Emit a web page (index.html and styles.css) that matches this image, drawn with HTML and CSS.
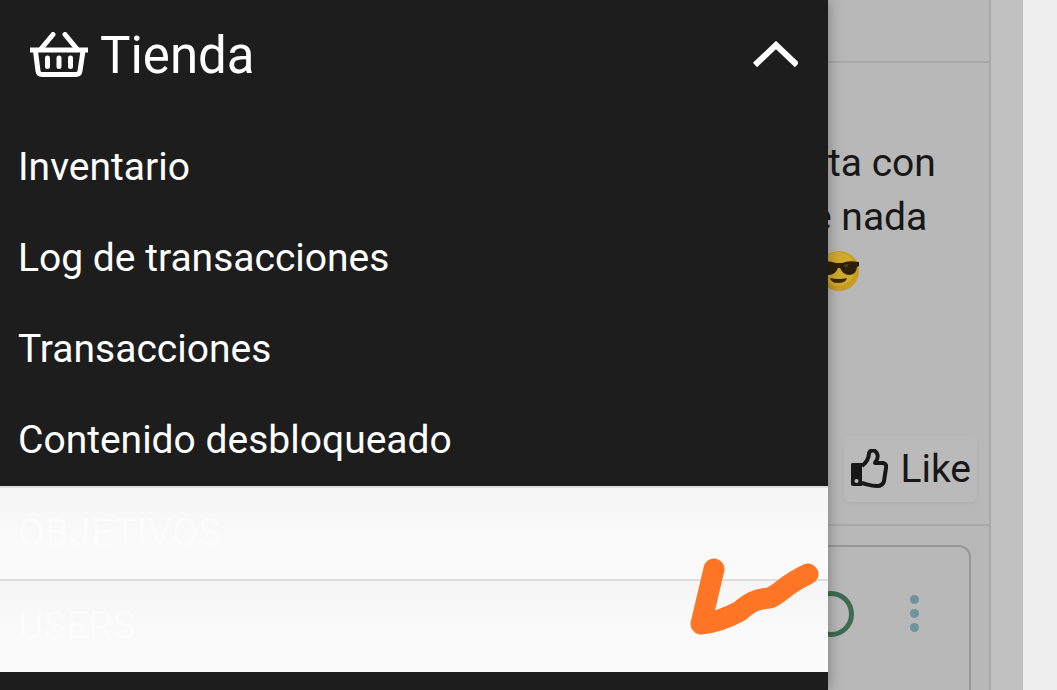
FILE: index.html
```
<!DOCTYPE html>
<html lang="es">
<head>
    <meta charset="UTF-8">
    <meta name="viewport" content="width=device-width, initial-scale=1.0">
    <title>Tienda</title>
    <link rel="stylesheet" href="styles.css">
</head>
<body>
    <div class="layout">
        <nav class="drawer">
            <button class="drawer-header" type="button" aria-expanded="true">
                <svg class="basket" viewBox="0 0 58 46" aria-hidden="true">
                    <g fill="none" stroke="#fff" stroke-linecap="round" stroke-linejoin="round">
                        <path d="M11 17 23 2.500M47 17 35 2.500" stroke-width="5"/>
                        <path d="M0 18H58" stroke-width="5" stroke-linecap="butt"/>
                        <path d="M5.500 19 8 39Q8.500 42.500 12 42.500H46Q49.500 42.500 50 39L53 19" stroke-width="5"/>
                        <path d="M17.500 26V34.500M29 26V34.500M40.500 26V34.500" stroke-width="5"/>
                    </g>
                </svg>
                <span class="drawer-title">Tienda</span>
                <svg class="chevron" viewBox="0 0 46 28" aria-hidden="true">
                    <path d="M3 24 24 4 45 24" fill="none" stroke="#fff" stroke-width="6"/>
                </svg>
            </button>
            <ul class="menu">
                <li><a href="#">Inventario</a></li>
                <li><a href="#">Log de transacciones</a></li>
                <li><a href="#">Transacciones</a></li>
                <li><a href="#">Contenido desbloqueado</a></li>
            </ul>
            <ul class="menu menu-light">
                <li><a href="#">OBJETIVOS</a></li>
                <li><a href="#">USERS</a></li>
            </ul>
            <svg class="mark" viewBox="0 0 130 80" aria-hidden="true">
                <path d="M25 12 12 67Q31 65 51 54C61 45 67 42 81 41 92 36 97 27 119 17" fill="none" stroke="#ff7526" stroke-width="21" stroke-linecap="round" stroke-linejoin="round"/>
            </svg>
        </nav>

        <main class="feed">
            <div class="post-header"></div>
            <article class="post">
                <div class="post-text">
                    <p>ta con</p>
                    <p class="cut">e nada</p>
                    <svg class="emoji" viewBox="0 0 42 42" role="img" aria-label="Cara con gafas de sol">
                        <circle cx="21" cy="21" r="20" fill="#c79c20"/>
                        <circle cx="20" cy="19" r="17" fill="#d1ab2c"/>
                        <path d="M1 12Q11 10 18 13H24Q31 10 41 12V16L39 17Q38 25 31 25 25 25 22 18H20Q17 25 11 25 4 25 3 17L1 16Z" fill="#2d2008"/>
                        <path d="M26 15 31 14 28 18Z" fill="#55421c"/>
                        <path d="M12 28Q21 30 29 28 28 33 20 33 13 33 12 28Z" fill="#3d2808"/>
                    </svg>
                </div>
                <button class="like" type="button">
                    <svg class="thumb" viewBox="0 0 38 40" aria-hidden="true">
                        <path d="M1 15Q1 14 3 14H12V37H3Q1 37 1 35Z" fill="#171717"/>
                        <circle cx="6.500" cy="32" r="2" fill="#b8b8b8"/>
                        <path d="M12 17C17 13 19 9 19 4Q21 0 25 2C29 5 28 10 25 14H33Q37 15 36 19L34 32Q33 37 27 37C20 37 17 35 11 34" fill="none" stroke="#171717" stroke-width="4" stroke-linejoin="round"/>
                    </svg>
                    Like
                </button>
            </article>
            <div class="next">
                <div class="next-card">
                    <span class="ring"></span>
                    <button class="more" type="button" aria-label="Más opciones">
                        <span></span><span></span><span></span>
                    </button>
                </div>
            </div>
        </main>
    </div>
</body>
</html>
```
FILE: styles.css
```
* {
    box-sizing: border-box;
}
body {
    margin: 0;
    background-color: #eee;
    font-family: Roboto, sans-serif;
    color: #171717;
    overflow: hidden;
}
button {
    border: none;
    background: none;
    padding: 0;
    font: inherit;
    color: inherit;
    cursor: pointer;
}
ul {
    list-style: none;
    margin: 0;
    padding: 0;
}
.layout {
    display: grid;
    grid-template-columns: 1fr 195px;
    padding-right: 34px;
    min-height: 100vh;
}

/* side menu */
.drawer {
    position: relative;
    z-index: 1;
    background-color: #1d1d1d;
    color: #fff;
    box-shadow: 0 0 14px rgba(0, 0, 0, 0.35);
}
.drawer-header {
    display: flex;
    align-items: center;
    gap: 12px;
    width: 100%;
    height: 110px;
    padding: 0 30px;
    font-size: 51px;
}
.basket {
    width: 58px;
    height: 46px;
}
.drawer-title {
    flex: 1;
    text-align: left;
}
.chevron {
    width: 46px;
    height: 28px;
}
.menu {
    padding-top: 12px;
}
.menu a {
    display: block;
    padding: 0 18px;
    font-size: 39px;
    line-height: 91px;
    color: #fff;
    text-decoration: none;
}
.menu-light {
    padding: 0;
}
.menu-light li {
    border-top: 2px solid #dedede;
    background: linear-gradient(#f6f6f6, #fafafa 60%);
}
.menu-light a {
    color: #fcfcfc;
}
.mark {
    position: absolute;
    top: 557px;
    right: 9px;
    width: 130px;
    height: 80px;
}

/* dimmed page behind the menu */
.feed {
    display: flex;
    flex-direction: column;
    background-color: #b8b8b8;
    border-right: 32px solid #c0c0c0;
}
.post-header {
    height: 63px;
    border-right: 2px solid #a9a9a9;
    border-bottom: 2px solid #a9a9a9;
}
.post {
    display: flex;
    flex-direction: column;
    justify-content: space-between;
    height: 463px;
    padding: 73px 12px 22px 0;
    border-right: 2px solid #a9a9a9;
    border-bottom: 2px solid #a9a9a9;
}
.post-text {
    font-size: 39px;
    line-height: 54px;
}
.post-text p {
    margin: 0;
}
.post-text .cut {
    margin-left: -17px;
}
.emoji {
    display: block;
    width: 42px;
    height: 42px;
    margin: 6px 0 0 -10px;
}
.like {
    display: flex;
    align-items: center;
    align-self: flex-end;
    gap: 12px;
    height: 66px;
    padding: 0 6px;
    border-radius: 6px;
    background-color: #bababa;
    box-shadow: 0 2px 3px #b0b0b0;
    font-size: 39px;
}
.thumb {
    width: 38px;
    height: 40px;
}
.next {
    display: flex;
    flex: 1;
    padding: 19px 18px 0 0;
    border-right: 2px solid #a9a9a9;
}
.next-card {
    display: flex;
    flex: 1;
    justify-content: space-between;
    align-items: flex-start;
    padding: 44px 50px 0 0;
    border: solid #989898;
    border-width: 2px 2px 0 0;
    border-radius: 0 12px 0 0;
}
.ring {
    width: 46px;
    height: 46px;
    margin-left: -20px;
    border: 5px solid #3d6c50;
    border-radius: 50%;
}
.more {
    display: flex;
    flex-direction: column;
    gap: 5px;
    padding-top: 4px;
}
.more span {
    width: 9px;
    height: 9px;
    border-radius: 50%;
    background-color: #6e949d;
}
```
